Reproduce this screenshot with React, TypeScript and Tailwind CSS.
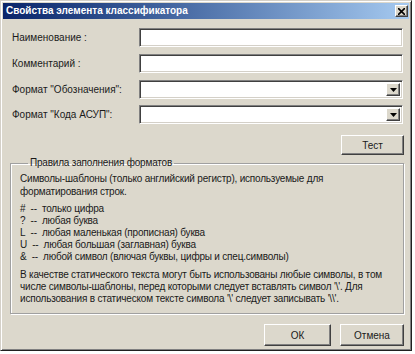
import React from "react";

const sunken =
  "bg-white border border-t-[#808080] border-l-[#808080] border-b-white border-r-white shadow-[inset_1px_1px_0_#404040,inset_-1px_-1px_0_#d4d0c8]";
const raised =
  "border border-t-white border-l-white border-r-[#404040] border-b-[#404040] shadow-[inset_-1px_-1px_0_#808080] bg-[#dcd8cc]";

function Row({ label, combo, top }: { label: string; combo?: boolean; top: string }) {
  return (
    <div className={`flex items-center h-[19px] ${top}`}>
      <div className="w-[136px] pl-[9px] text-[10px] text-[#1a1a1a] whitespace-nowrap">{label}</div>
      <div className={`${sunken} w-[264px] h-[19px] flex justify-end items-stretch p-[2px]`}>
        {combo && (
          <div className={`${raised} w-[14px] flex items-center justify-center`}>
            <svg width="7" height="4" viewBox="0 0 7 4">
              <path d="M0 0h7L3.5 4z" fill="#000" />
            </svg>
          </div>
        )}
      </div>
    </div>
  );
}

export default function App() {
  return (
    <div className="w-[415px] h-[354px] bg-white" style={{ fontFamily: '"Liberation Sans", Arial, sans-serif' }}>
      <div className="w-[412px] h-[351px] bg-[#dcd8cc] border border-t-[#d4d0c8] border-l-[#d4d0c8] border-r-[#202020] border-b-[#202020] shadow-[inset_1px_1px_0_white,inset_-1px_-1px_0_#808080] p-[2px] flex flex-col">
        <div className="h-[16px] bg-gradient-to-r from-[#0a246a] to-[#a6caf0] flex items-center justify-between pl-[3px] pr-[1px]">
          <span className="text-white font-bold text-[10px] leading-none">Свойства элемента классификатора</span>
          <div className={`${raised} w-[13px] h-[12px] flex items-center justify-center`}>
            <svg width="7" height="7" viewBox="0 0 7 7">
              <path d="M0 0L7 7M7 0L0 7" stroke="#000" strokeWidth="1.6" />
            </svg>
          </div>
        </div>
        <Row label="Наименование :" top="mt-[9px]" />
        <Row label="Комментарий :" top="mt-[7px]" />
        <Row label='Формат "Обозначения":' combo top="mt-[7px]" />
        <Row label='Формат "Кода АСУП":' combo top="mt-[6px]" />
        <div className="flex justify-end pr-[5px] mt-[11px]">
          <div className={`${raised} w-[63px] h-[20px] flex items-center justify-center text-[10px] text-[#1a1a1a]`}>Тест</div>
        </div>
        <fieldset className="ml-[7px] mr-[5px] mt-[2px] h-[157px] border border-[#a0a0a0] shadow-[1px_1px_0_white,inset_1px_1px_0_white] pl-[9px] pr-[2px] text-[10px] leading-[12px] text-[#1a1a1a] whitespace-nowrap tracking-[-0.2px]">
          <legend className="ml-[8px] px-[2px] text-[10px] leading-[12px]">Правила заполнения форматов</legend>
          <div className="mt-[3px] leading-[13px]">
            Символы-шаблоны (только английский регистр), используемые для
            <br />
            форматирования строк.
          </div>
          <div className="mt-[5px]">
            <div>#&nbsp;&nbsp;--&nbsp;&nbsp;только цифра</div>
            <div>?&nbsp;&nbsp;--&nbsp;&nbsp;любая буква</div>
            <div>L&nbsp;&nbsp;--&nbsp;&nbsp;любая маленькая (прописная) буква</div>
            <div>U&nbsp;&nbsp;--&nbsp;&nbsp;любая большая (заглавная) буква</div>
            <div>&amp;&nbsp;&nbsp;--&nbsp;&nbsp;любой символ (влючая буквы, цифры и спец.символы)</div>
          </div>
          <div className="mt-[6px]">
            В качестве статического текста могут быть использованы любые символы, в том
            <br />
            числе символы-шаблоны, перед которыми следует вставлять символ '\'. Для
            <br />
            использования в статическом тексте символа '\' следует записывать '\\'.
          </div>
        </fieldset>
        <div className="flex justify-end gap-[9px] pr-[5px] mt-[10px]">
          <div className={`${raised} w-[67px] h-[22px] flex items-center justify-center text-[10px] text-[#1a1a1a]`}>ОК</div>
          <div className={`${raised} w-[64px] h-[22px] flex items-center justify-center text-[10px] text-[#1a1a1a]`}>Отмена</div>
        </div>
      </div>
    </div>
  );
}
